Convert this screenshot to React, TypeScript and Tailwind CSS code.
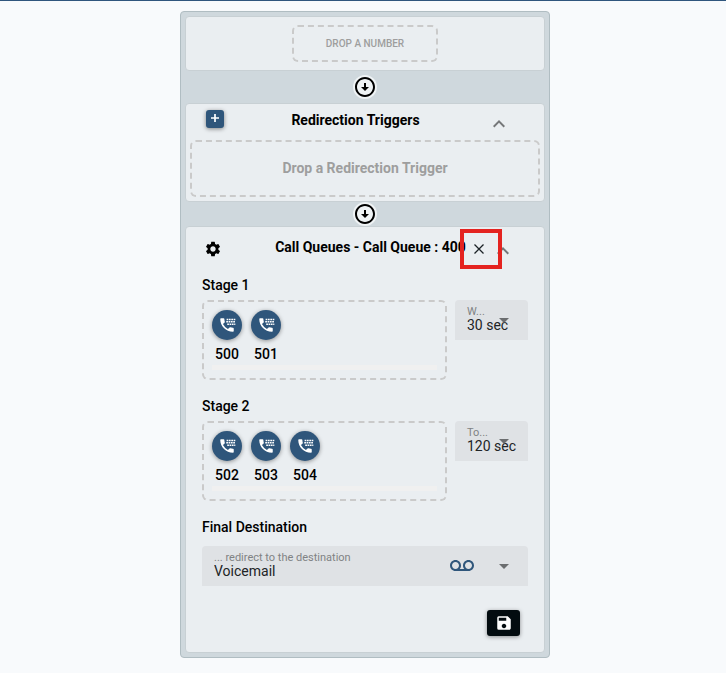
import type { ReactNode } from "react";
import {
  MdArrowCircleDown,
  MdArrowDropDown,
  MdExpandLess,
  MdSave,
  MdSettings,
  MdVoicemail,
} from "react-icons/md";

const stages = [
  {
    title: "Stage 1",
    extensions: ["500", "501"],
    label: "W...",
    value: "30 sec",
  },
  {
    title: "Stage 2",
    extensions: ["502", "503", "504"],
    label: "To...",
    value: "120 sec",
  },
];

const PlusIcon = () => (
  <svg viewBox="0 0 8 8" className="mb-0.5 size-2" stroke="currentColor" strokeWidth="1.7">
    <path d="M4 0v8M0 4h8" />
  </svg>
);

const CloseIcon = () => (
  <svg viewBox="0 0 10 10" className="size-2.5" stroke="currentColor" strokeWidth="1.3">
    <path d="M0.5 0.5l9 9M9.5 0.5l-9 9" />
  </svg>
);

const DialPhoneIcon = () => (
  <svg viewBox="0 0 24 24" className="size-[18px]" fill="currentColor">
    <path d="M20 15.5c-1.25 0-2.45-.2-3.57-.57a1.02 1.02 0 0 0-1.02.24l-2.2 2.2a15.05 15.05 0 0 1-6.59-6.58l2.2-2.21a.96.96 0 0 0 .25-1A11.36 11.36 0 0 1 8.5 4c0-.55-.45-1-1-1H4c-.55 0-1 .45-1 1 0 9.39 7.61 17 17 17 .55 0 1-.45 1-1v-3.5c0-.55-.45-1-1-1z" />
    <path d="M11.5 3.6h2.3v2h-2.3zM14.6 3.6h2.3v2h-2.3zM17.7 3.6H20v2h-2.3zM20.8 3.6h2.3v2h-2.3zM11 6.8h2.3v2H11zM14.1 6.8h2.3v2h-2.3zM17.2 6.8h2.3v2h-2.3zM20.3 6.8h2.3v2h-2.3zM12.3 10h2.3v2h-2.3zM15.4 10h2.3v2h-2.3zM18.5 10h2.3v2h-2.3zM21.6 10h1.5v2h-1.5z" />
  </svg>
);

const Card = ({ children }: { children: ReactNode }) => (
  <section className="rounded border border-[#c8d0d4] bg-[#eaeef1]">{children}</section>
);

const FlowArrow = ({ className = "" }: { className?: string }) => (
  <div className={`flex justify-center ${className}`}>
    <MdArrowCircleDown size={24} className="rounded-full bg-[#eff3f5] text-black" />
  </div>
);

type FieldProps = {
  id: string;
  label: string;
  value: string;
  children?: ReactNode;
};

const SelectField = ({ id, label, value, children }: FieldProps) => (
  <div className="relative h-10 rounded-t bg-[#dfe2e5] pl-3 pt-1.5">
    <label htmlFor={id} className="block text-[11px] leading-3 text-[#7f8284]">
      {label}
    </label>
    <select
      id={id}
      defaultValue={value}
      className="block h-[14px] w-full appearance-none bg-transparent text-sm leading-[14px] text-[#212426] outline-none"
    >
      <option>{value}</option>
    </select>
    <div className="pointer-events-none absolute inset-y-0 right-3 flex items-center gap-[18px]">
      {children}
      <MdArrowDropDown size={24} className="text-[#6b6d6f]" />
    </div>
  </div>
);

const App = () => {
  return (
    <main className="min-h-screen border-t border-[#2f567d] bg-[#f8fafc] pl-1 pt-[10px] pb-4 font-['Roboto',sans-serif] text-sm text-black">
      <div className="mx-auto max-w-[370px] rounded border border-[#b0bdc2] bg-[#cfd8dd] p-1">
        <Card>
          <div className="flex justify-center py-2">
            <div className="rounded-md border-2 border-dashed border-[#cacaca] px-8 py-2 text-[10px] leading-[17px] font-medium text-[#9e9e9e]">
              DROP A NUMBER
            </div>
          </div>
        </Card>

        <FlowArrow className="py-1" />

        <Card>
          <header className="flex items-start pl-5 pr-[33px]">
            <button
              type="button"
              aria-label="Add redirection trigger"
              className="mt-1.5 flex size-[18px] items-center justify-center rounded-[3px] bg-[#2f567b] text-white shadow-[0_1px_4px_rgba(0,0,0,0.45)]"
            >
              <PlusIcon />
            </button>
            <h2 className="flex-1 text-center leading-8 font-bold">Redirection Triggers</h2>
            <button type="button" aria-label="Collapse redirection triggers" className="mt-2 text-[#757779]">
              <MdExpandLess size={24} />
            </button>
          </header>
          <div className="mx-1 mt-1 mb-1 rounded-md border-2 border-dashed border-[#cacaca] py-4 text-center leading-[21px] font-bold text-[#9e9e9e]">
            Drop a Redirection Trigger
          </div>
        </Card>

        <FlowArrow />

        <Card>
          <header className="relative flex items-start pl-[18px] pr-[29px] pt-1">
            <button type="button" aria-label="Call queue settings" className="mt-[9px]">
              <MdSettings size={18} />
            </button>
            <h2 className="flex-1 pl-7 text-center leading-8 font-bold whitespace-nowrap">
              Call Queues - Call Queue : 400
            </h2>
            <button type="button" aria-label="Collapse call queue" className="mt-2 text-[#757779]">
              <MdExpandLess size={24} />
            </button>
            <button
              type="button"
              aria-label="Remove call queue"
              className="absolute top-0.5 right-[42px] flex h-10 w-[42px] items-center justify-center border-4 border-[#e42320] pr-1 text-[#1b2226]"
            >
              <CloseIcon />
            </button>
          </header>

          <div className="px-4 pt-3 pb-4">
            {stages.map((stage) => (
              <div key={stage.title} className="mb-4">
                <h3 className="mb-[5px] leading-5 font-medium">{stage.title}</h3>
                <div className="flex items-start gap-2">
                  <div className="h-20 min-w-0 flex-1 rounded-md border-2 border-dashed border-[#cacaca] p-2">
                    <ul className="flex h-[55px] gap-[9px]">
                      {stage.extensions.map((ext) => (
                        <li key={ext} className="flex w-[30px] flex-col items-center">
                          <span className="flex size-[30px] items-center justify-center rounded-full bg-[#2f567b] text-white shadow-[0_1px_4px_rgba(0,0,0,0.4)]">
                            <DialPhoneIcon />
                          </span>
                          <span className="mt-1 leading-5 font-medium">{ext}</span>
                        </li>
                      ))}
                    </ul>
                    <div className="h-[5px] bg-[#f0f0f0]" />
                  </div>
                  <div className="w-[73px]">
                    <SelectField id={stage.title.replace(" ", "-")} label={stage.label} value={stage.value} />
                  </div>
                </div>
              </div>
            ))}

            <h3 className="mb-[9px] leading-5 font-medium">Final Destination</h3>
            <SelectField id="destination" label="... redirect to the destination" value="Voicemail">
              <MdVoicemail size={24} className="text-[#2f567b]" />
            </SelectField>

            <div className="mt-6 flex justify-end pr-2">
              <button
                type="button"
                aria-label="Save"
                className="flex h-[26px] w-[33px] items-center justify-center rounded-[3px] bg-[#030c10] text-white shadow-[0_1px_4px_rgba(0,0,0,0.4)]"
              >
                <MdSave size={18} />
              </button>
            </div>
          </div>
        </Card>
      </div>
    </main>
  );
};

export default App;
